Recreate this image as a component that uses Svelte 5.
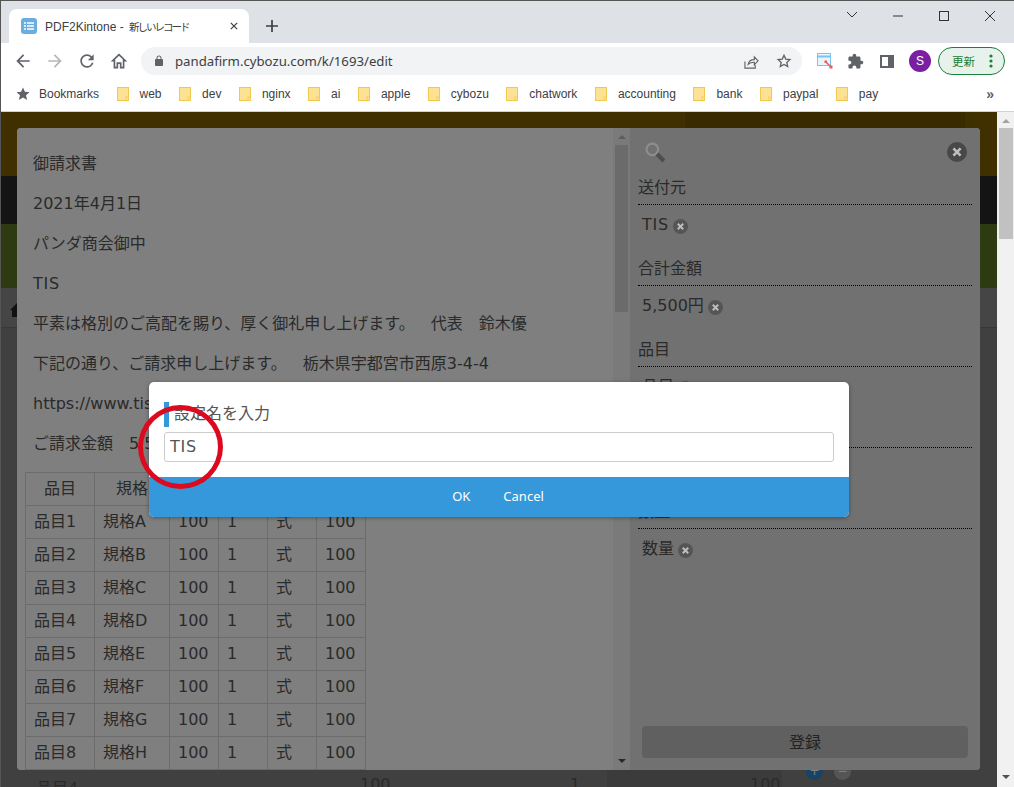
<script>
  const marks = ['web','dev','nginx','ai','apple','cybozu','chatwork','accounting','bank','paypal','pay'];
  const doc = ['御請求書','2021年4月1日','パンダ商会御中','TIS','平素は格別のご高配を賜り、厚く御礼申し上げます。　代表　鈴木優','下記の通り、ご請求申し上げます。　栃木県宇都宮市西原3-4-4','https://www.tis.co.jp/','ご請求金額　5,500円'];
  const rows = ['A','B','C','D','E','F','G','H'];
  const fields = [['送付元','TIS'],['合計金額','5,500円'],['品目','品目'],['単価','単価'],['数量','数量']];
</script>

{#snippet xIcon(cls)}
  <svg class={cls} viewBox="0 0 20 20"><circle cx="10" cy="10" r="10"/><path d="M6.400 6.400l7.200 7.200M13.600 6.400l-7.200 7.200" stroke="#bebebe" stroke-width="2.600" fill="none"/></svg>
{/snippet}

<div class="window">
  <header class="tabstrip">
    <div class="tab">
      <svg class="favicon" viewBox="0 0 16 16"><rect width="16" height="16" rx="3" fill="#6aaee0"/><path d="M6 5h7M6 8h7M6 11h7M3 5h2M3 8h2M3 11h2" stroke="#fff" stroke-width="1.600"/></svg>
      <span class="tab-title">PDF2Kintone - <span class="tab-jp">新しいレコード</span></span>
      <svg class="tab-x" viewBox="0 0 10 10"><path d="M1 1l8 8M9 1l-8 8" stroke="#3c4043" stroke-width="1.500"/></svg>
    </div>
    <svg class="plus" viewBox="0 0 12 12"><path d="M6 0v12M0 6h12" stroke="#3c4043" stroke-width="1.700"/></svg>
    <div class="winctl">
      <svg class="ctl" viewBox="0 0 46 30"><path d="M18 11l5 5 5-5" stroke="#333" fill="none"/></svg>
      <svg class="ctl" viewBox="0 0 46 30"><path d="M18 15h10" stroke="#333"/></svg>
      <svg class="ctl" viewBox="0 0 46 30"><rect x="18.500" y="10.500" width="9" height="9" stroke="#333" fill="none"/></svg>
      <svg class="ctl" viewBox="0 0 46 30"><path d="M18 10l10 10M28 10L18 20" stroke="#333" fill="none"/></svg>
    </div>
  </header>

  <nav class="toolbar">
    <svg class="tb" viewBox="0 0 24 24"><path fill="#5f6368" d="M20 11H7.830l5.590-5.590L12 4l-8 8 8 8 1.410-1.410L7.830 13H20v-2z"/></svg>
    <svg class="tb" viewBox="0 0 24 24"><path fill="#b4b6b9" d="M4 11h12.170l-5.590-5.590L12 4l8 8-8 8-1.410-1.410L16.170 13H4v-2z"/></svg>
    <svg class="tb" viewBox="0 0 24 24"><path fill="#5f6368" d="M17.650 6.350A7.958 7.958 0 0 0 12 4c-4.420 0-7.990 3.580-7.990 8s3.570 8 7.990 8c3.730 0 6.840-2.550 7.730-6h-2.080A5.990 5.990 0 0 1 12 18c-3.310 0-6-2.690-6-6s2.690-6 6-6c1.660 0 3.140.690 4.220 1.780L13 11h7V4l-2.350 2.350z"/></svg>
    <svg class="tb" viewBox="0 0 24 24"><path fill="none" stroke="#5f6368" stroke-width="2" d="M12 4.300L4.500 11.500H6.500V20H10V14.500H14V20H17.500V11.500H19.500z"/></svg>
    <div class="omnibox">
      <svg class="lock" viewBox="0 0 24 24"><path fill="#5f6368" d="M18 8h-1V6c0-2.760-2.240-5-5-5S7 3.240 7 6v2H6c-1.100 0-2 .9-2 2v10c0 1.100.9 2 2 2h12c1.100 0 2-.9 2-2V10c0-1.100-.9-2-2-2zM9 6c0-1.660 1.340-3 3-3s3 1.340 3 3v2H9V6z"/></svg>
      <span class="url">pandafirm.cybozu.com/k/1693/edit</span>
      <svg class="share" viewBox="0 0 16 16"><path fill="none" stroke="#5f6368" stroke-width="1.200" d="M1 8v7h11v-3M4.500 11c.5-3.500 3-5 6.500-5V3l4 4.300-4 4.300V8.800c-3 0-5 .5-6.500 2.200z"/></svg>
      <svg class="star" viewBox="0 0 24 24"><path fill="none" stroke="#5f6368" stroke-width="2" d="M12 3.500l2.600 5.700 6.200.7-4.600 4.200 1.300 6.100L12 17.200l-5.500 3 1.300-6.100-4.600-4.200 6.200-.7z"/></svg>
    </div>
    <svg class="ext" viewBox="0 0 16 16"><rect x=".5" y=".5" width="13" height="12" fill="#e8f5fd" stroke="#7cc4f0"/><path d="M1 3.500h12" stroke="#7cc4f0" stroke-width="2"/><path d="M8.500 8.500l5 5" stroke="#ef5a4c" stroke-width="1.500"/><rect x="7.500" y="7.500" width="2.500" height="2.500" fill="#ef5a4c"/><rect x="12.500" y="12.500" width="3" height="3" fill="#ef5a4c"/></svg>
    <svg class="puzzle" viewBox="0 0 24 24"><path fill="#5f6368" d="M20.500 11H19V7c0-1.100-.9-2-2-2h-4V3.500C13 2.120 11.880 1 10.500 1S8 2.120 8 3.500V5H4c-1.100 0-1.990.9-1.990 2v3.800H3.500c1.490 0 2.700 1.210 2.700 2.700s-1.210 2.700-2.700 2.700H2V20c0 1.100.9 2 2 2h3.800v-1.500c0-1.490 1.210-2.700 2.700-2.700 1.490 0 2.700 1.210 2.700 2.700V22H17c1.100 0 2-.9 2-2v-4h1.500c1.380 0 2.500-1.120 2.500-2.500S21.880 11 20.500 11z"/></svg>
    <div class="sidepanel"></div>
    <div class="avatar">S</div>
    <div class="update"><span>更新</span><svg class="dots" viewBox="0 0 4 14"><circle cx="2" cy="2" r="1.600"/><circle cx="2" cy="7" r="1.600"/><circle cx="2" cy="12" r="1.600"/></svg></div>
  </nav>

  <nav class="bookmarks">
    <svg class="bm-star" viewBox="0 0 14 14"><path fill="#5f6368" d="M7 .5l1.900 4.300 4.600.4-3.500 3.100 1.100 4.600L7 10.500l-4.100 2.400L4 8.300.5 5.200l4.600-.4z"/></svg>
    <span class="bm-label">Bookmarks</span>
    {#each marks as m}
      <span class="bm">
        <svg class="folder" viewBox="0 0 12 14"><rect x=".5" y=".5" width="11" height="13" fill="#fde293" stroke="#f0c94e"/><rect x="9" y="10" width="2.500" height="3.500" fill="#fde293" stroke="#f0c94e" stroke-width=".8"/></svg>
        <span class="bm-label">{m}</span>
      </span>
    {/each}
    <span class="more">»</span>
  </nav>

  <div class="page">
    <main class="content">
      <div class="band yellow"><div class="dark"></div></div>
      <div class="band black"></div>
      <div class="band olive"></div>
      <div class="band crumb"><svg class="crumb-home" viewBox="0 0 14 14"><path fill="#222" d="M7 0L0 7h2v7h10V7h2z"/></svg></div>
      <div class="band body"></div>
      <div class="lastrow">
        <div class="lastcell"></div>
        <span class="c1">品目4</span><span class="c2">100</span><span class="c3">1</span><span class="c4">100</span>
        <span class="round plus-r">+</span><span class="round minus-r">−</span>
      </div>

      <section class="viewer">
        <div class="doc">
          {#each doc as line}<p class:wide={line === 'TIS'}>{line}</p>{/each}
          <table>
            <colgroup><col class="w1"/><col class="w2"/><col class="w3"/><col class="w3"/><col class="w3"/><col class="w4"/></colgroup>
            <thead><tr><th>品目</th><th>規格</th><th>単価</th><th>数量</th><th>単位</th><th>金額</th></tr></thead>
            <tbody>
              {#each rows as r, i}
                <tr><td>品目{i + 1}</td><td>規格{r}</td><td>100</td><td>1</td><td>式</td><td>100</td></tr>
              {/each}
            </tbody>
          </table>
        </div>
        <div class="docbar">
          <span class="tri up"></span>
          <div class="docthumb"></div>
          <span class="tri down"></span>
        </div>
        <aside class="side">
          <div class="sidehead">
            <svg class="search" viewBox="0 0 20 20"><circle cx="7" cy="7" r="5.500" fill="none" stroke="#8e8e8e" stroke-width="2"/><path d="M11.500 11.500l6.500 6.500" stroke="#4e4e4e" stroke-width="4"/></svg>
            {@render xIcon('x-big')}
          </div>
          {#each fields as f}
            <div class="field">
              <div class="label">{f[0]}</div>
              <div class="value"><span class:wide={f[1] === 'TIS'}>{f[1]}</span>{@render xIcon('x-small')}</div>
            </div>
          {/each}
          <button class="save">登録</button>
        </aside>
      </section>

      <div class="mask"></div>

      <div class="modal">
        <div class="mbody">
          <div class="mtitle">設定名を入力</div>
          <input class="minput" value="TIS" />
        </div>
        <div class="mfoot"><span>OK</span><span>Cancel</span></div>
      </div>

      <div class="ring"></div>
    </main>
    <div class="scroll">
      <span class="stri up2"></span>
      <div class="sthumb"></div>
      <span class="stri down2"></span>
    </div>
  </div>
</div>

<style>
  :global(body) { margin: 0; }
  .window { width: 1014px; height: 787px; display: flex; flex-direction: column; overflow: hidden; background: #fff; font-family: "Liberation Sans", "Noto Sans CJK JP", sans-serif; border-left: 1px solid #555; box-sizing: border-box; }

  .tabstrip { height: 43px; flex: none; box-sizing: border-box; border-top: 1px solid #555; background: #dee1e6; display: flex; align-items: flex-end; padding-left: 8px; }
  .tab { width: 240px; height: 34px; box-sizing: border-box; background: #fff; border-radius: 8px 8px 0 0; display: flex; align-items: center; padding: 0 11px 0 12px; }
  .favicon { width: 16px; height: 16px; flex: none; }
  .tab-title { margin-left: 8px; font-size: 12px; color: #3c4043; white-space: nowrap; flex: 1; }
  .tab-jp { font-size: 10.500px; letter-spacing: -2px; margin-left: 2px; }
  .tab-x { width: 8px; height: 8px; flex: none; }
  .plus { width: 12px; height: 12px; margin: 0 0 11px 17px; flex: none; }
  .winctl { margin-left: auto; align-self: flex-start; display: flex; margin-right: 1px; }
  .ctl { width: 46px; height: 30px; display: block; }

  .toolbar { height: 36px; flex: none; display: flex; align-items: center; padding-left: 12px; background: #fff; }
  .tb { width: 20px; height: 20px; margin-right: 12px; flex: none; }
  .omnibox { width: 661px; height: 28px; background: #f1f3f4; border-radius: 14px; display: flex; align-items: center; flex: none; box-sizing: border-box; padding: 0 10px 0 12px; }
  .lock { width: 12px; height: 12px; flex: none; }
  .url { margin-left: 10px; font: 13.200px "Noto Sans", sans-serif; color: #3c4043; flex: 1; }
  .share { width: 15px; height: 15px; margin-right: 17px; }
  .star { width: 16px; height: 16px; }
  .ext { width: 16px; height: 16px; margin-left: 15px; flex: none; }
  .puzzle { width: 17px; height: 17px; margin-left: 14px; flex: none; }
  .sidepanel { width: 14px; height: 13px; box-sizing: border-box; border: 2px solid #5f6368; border-right-width: 6px; margin-left: 16px; flex: none; }
  .avatar { width: 22px; height: 22px; border-radius: 50%; background: #7b1fa2; color: #fff; font-size: 12px; display: flex; align-items: center; justify-content: center; margin-left: 15px; flex: none; }
  .update { width: 67px; height: 28px; box-sizing: border-box; margin-left: 7px; border: 1px solid #188038; border-radius: 14px; background: #e8f2ec; display: flex; align-items: center; padding-left: 13px; flex: none; }
  .update span { font: 11.500px "Noto Sans CJK JP", sans-serif; color: #188038; }
  .dots { width: 4px; height: 14px; margin-left: 14px; fill: #188038; }

  .bookmarks { height: 33px; flex: none; box-sizing: border-box; display: flex; align-items: center; padding: 0 0 2px 15px; border-bottom: 1px solid #d0d2d5; background: #fff; }
  .bm-star { width: 14px; height: 14px; margin-right: 9px; flex: none; }
  .bm-label { font-size: 12px; color: #3c4043; white-space: nowrap; }
  .bm { display: flex; align-items: center; margin-left: 17.500px; }
  .folder { width: 12px; height: 14px; margin-right: 11px; flex: none; }
  .more { margin-left: auto; margin-right: 20px; font-size: 14px; color: #5f6368; font-weight: 700; }

  .page { flex: 1; display: flex; min-height: 0; }
  .content { flex: 1; position: relative; overflow: hidden; display: flex; flex-direction: column; background: #808080; }
  .scroll { width: 17px; flex: none; background: #f1f1f1; display: flex; flex-direction: column; align-items: center; }
  .stri { width: 0; height: 0; border-left: 4px solid transparent; border-right: 4px solid transparent; }
  .up2 { border-bottom: 4px solid #a3a3a3; margin-top: 7px; }
  .sthumb { width: 14px; height: 111px; background: #c1c1c1; margin-top: 5px; }
  .down2 { border-top: 4px solid #505050; margin-top: auto; margin-bottom: 8px; }

  .band { flex: none; }
  .yellow { height: 64px; background: #806000; display: flex; justify-content: flex-end; padding-right: 32px; }
  .dark { width: 280px; background: #745400; }
  .black { height: 48px; background: #282828; }
  .olive { height: 64px; background: #5c7420; }
  .crumb { height: 40px; background: #8a8a8a; border-bottom: 1px solid #707070; box-sizing: border-box; padding: 15px 0 0 9px; }
  .crumb-home { width: 14px; height: 14px; display: block; }
  .body { height: 441px; background: #808080; }
  .lastrow { flex: 1; position: relative; background: #808080; font: 16px "DejaVu Sans", "Noto Sans CJK JP", sans-serif; color: #555; }
  .lastcell { position: absolute; left: 606px; top: 0; bottom: 0; width: 175px; background: #767676; }
  .lastrow span { position: absolute; top: 6px; }
  .c1 { left: 35px; } .c2 { left: 359px; } .c3 { left: 569px; } .c4 { left: 749px; }
  .lastrow .round { width: 17px; height: 17px; border-radius: 50%; color: #fff; top: -6px; text-align: center; font-size: 12px; line-height: 17px; }
  .plus-r { left: 805px; background: #2e86c8; }
  .minus-r { left: 833px; background: #aaa; }

  .viewer { position: absolute; left: 16px; top: 16px; width: 963px; height: 642px; border-radius: 4px; overflow: hidden; display: flex; background: #fff; }
  .doc { width: 596px; flex: none; box-sizing: border-box; padding: 9px 8px 0 8px; background: #fff; color: #555; font: 16px/24px "DejaVu Sans", "Noto Sans CJK JP", sans-serif; overflow: hidden; text-spacing-trim: space-all; }
  .doc p { margin: 14px 8px; line-height: 26px; white-space: nowrap; }
  .wide { letter-spacing: .8px; }
  table { border-collapse: collapse; table-layout: fixed; width: 340px; margin-top: 15px; }
  .w1 { width: 69px; } .w2 { width: 75px; } .w3 { width: 49px; } .w4 { width: 49px; }
  th, td { border: 1px solid #d8d8d8; padding: 4px 8px; height: 24px; font-weight: 400; text-align: left; white-space: nowrap; overflow: hidden; }
  th { text-align: center; }
  .docbar { width: 17px; flex: none; background: #f5f5f5; display: flex; flex-direction: column; align-items: center; }
  .tri { width: 0; height: 0; border-left: 4px solid transparent; border-right: 4px solid transparent; }
  .up { border-bottom: 4px solid #b8b8b8; margin-top: 7px; }
  .docthumb { width: 13px; height: 167px; background: #d6d6d6; margin-top: 6px; }
  .down { border-top: 4px solid #505050; margin-top: auto; margin-bottom: 7px; }

  .side { width: 350px; flex: none; box-sizing: border-box; padding: 0 8px 12px; background: #e3e3e3; color: #555; display: flex; flex-direction: column; font: 16px/24px "DejaVu Sans", "Noto Sans CJK JP", sans-serif; }
  .sidehead { height: 47px; flex: none; display: flex; justify-content: space-between; align-items: flex-start; padding: 14px 5px 0 7px; box-sizing: border-box; }
  .search { width: 21px; height: 21px; position: relative; z-index: 2; }
  :global(.x-big) { width: 20px; height: 20px; position: relative; z-index: 2; fill: #484848; }
  .field { margin-bottom: 20px; flex: none; }
  .label { line-height: 26px; padding-bottom: 3px; border-bottom: 1px dotted #000; margin-bottom: 7px; position: relative; z-index: 2; color: #2a2a2a; }
  .value { padding-left: 4px; display: flex; align-items: center; gap: 4px; line-height: 26px; margin-bottom: -2px; }
  :global(.x-small) { width: 15px; height: 15px; margin-top: 2px; position: relative; z-index: 2; fill: #555; }
  .save { margin: auto 4px 0; height: 32px; border: 0; border-radius: 4px; background: #c0c0c0; color: #444; font: 16px "Noto Sans CJK JP", sans-serif; flex: none; padding: 0 0 3px; }

  .mask { position: absolute; inset: 0; background: rgba(0, 0, 0, .5); }

  .modal { position: absolute; z-index: 3; left: 148px; top: 270px; width: 700px; height: 135px; border-radius: 5px; overflow: hidden; background: #fff; box-shadow: 0 1px 4px rgba(0, 0, 0, .35); display: flex; flex-direction: column; }
  .mbody { padding: 20px 15px 0; flex: 1; }
  .mtitle { height: 25px; border-left: 5px solid #3498db; padding-left: 5px; font: 16px/20px "Noto Sans CJK JP", sans-serif; color: #555; text-spacing-trim: space-all; }
  .minput { display: block; width: 100%; height: 30px; margin-top: 5px; box-sizing: border-box; border: 1px solid #ccc; border-radius: 3px; padding: 0 5px 2px; font: 16px "DejaVu Sans", sans-serif; letter-spacing: .8px; color: #555; background: #fff; outline: none; }
  .mfoot { height: 40px; background: #3498db; color: #fff; display: flex; align-items: center; justify-content: center; gap: 33px; font: 13px "Noto Sans", sans-serif; padding: 0 2px 2px 0; box-sizing: border-box; flex: none; }

  .ring { position: absolute; z-index: 4; left: 137px; top: 293px; width: 85px; height: 84px; box-sizing: border-box; border: 5.500px solid #dc0a1e; border-radius: 50%; }
</style>
